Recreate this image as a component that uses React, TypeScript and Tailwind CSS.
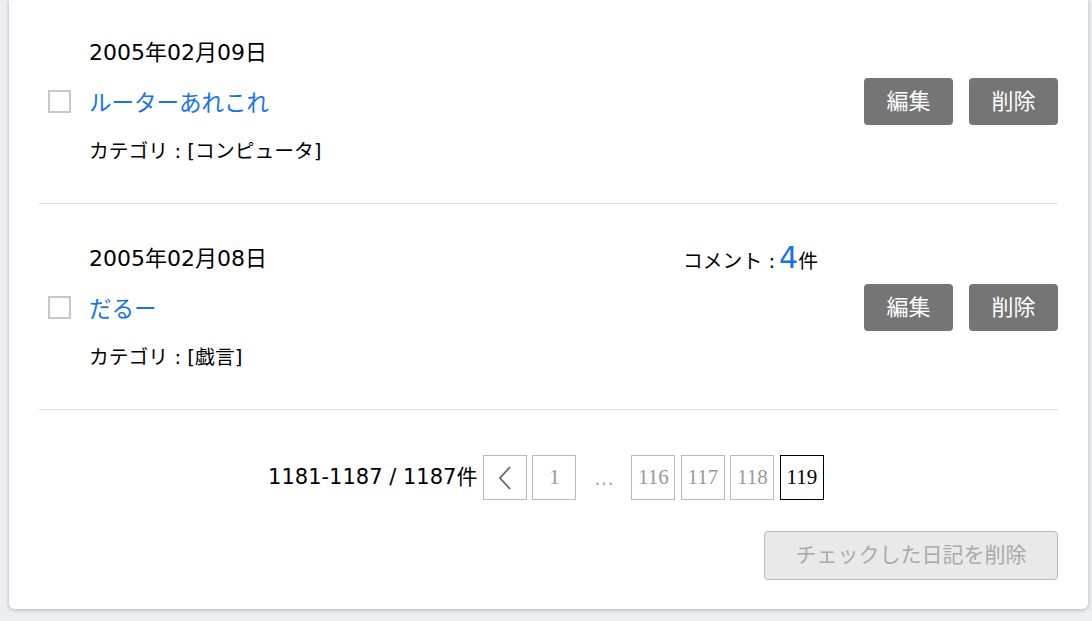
import React from "react";

type Entry = {
  date: string;
  title: string;
  category: string;
  comments?: number;
};

const entries: Entry[] = [
  { date: "2005年02月09日", title: "ルーターあれこれ", category: "コンピュータ" },
  { date: "2005年02月08日", title: "だるー", category: "戯言", comments: 4 },
];

const font = { fontFamily: '"DejaVu Sans", "Noto Sans CJK JP", sans-serif' };

function EntryRow({ entry, first }: { entry: Entry; first?: boolean }) {
  return (
    <div
      className={`flex items-center border-b border-[#dddddd] pb-[36px] ${first ? "pt-[35px]" : "pt-[37px]"}`}
    >
      <span className="ml-[9px] mr-[18px] h-[23px] w-[23px] shrink-0 border-2 border-[#c8c8c8] bg-white" />
      <div className="flex flex-1 flex-col">
        <div className="flex h-[34px] items-center text-[22px] text-black">{entry.date}</div>
        <a className="mt-[20px] flex h-[30px] items-center text-[22.5px] text-[#1672f3]">{entry.title}</a>
        <div className="mt-[18px] flex h-[30px] items-center text-[19.8px] text-black">
          カテゴリ : [{entry.category}]
        </div>
      </div>
      {entry.comments ? (
        <div className="mr-[46px] flex h-[36px] items-end self-start text-[19.8px] text-black">
          コメント :<span className="ml-[4px] text-[30px] leading-[38px] text-[#1672f3]">{entry.comments}</span>件
        </div>
      ) : null}
      <div className="flex gap-[16px]">
        <button className="h-[47px] w-[89px] rounded-[4px] bg-[#757575] text-[22px] text-white">編集</button>
        <button className="h-[47px] w-[89px] rounded-[4px] bg-[#757575] text-[22px] text-white">削除</button>
      </div>
    </div>
  );
}

function PageBox({ children, current }: { children: React.ReactNode; current?: boolean }) {
  return (
    <span
      className={`flex h-[45px] w-[44px] items-center justify-center border text-[21px] ${
        current ? "border-black text-black" : "border-[#bbbbbb] text-[#999999]"
      }`}
      style={{ fontFamily: '"Liberation Serif", serif' }}
    >
      {children}
    </span>
  );
}

export default function App() {
  return (
    <div className="min-h-[621px] bg-[#eceef1] pl-[9px] pr-[4px]" style={font}>
      <div className="rounded-b-[6px] bg-white px-[30px] pb-[29px] shadow-[0_1px_4px_rgba(0,0,0,0.25)]">
        {entries.map((entry, i) => (
          <EntryRow key={entry.date} entry={entry} first={i === 0} />
        ))}

        <div className="mt-[45px] flex items-center justify-center gap-[5.5px] pr-[5px]">
          <span className="text-[21px] text-black">1181-1187 / 1187件</span>
          <PageBox>
            <svg width="20" height="28" viewBox="0 0 20 28" fill="none">
              <path d="M15 3 L5 14 L15 25" stroke="#666666" strokeWidth="1.8" />
            </svg>
          </PageBox>
          <PageBox>1</PageBox>
          <span className="flex h-[45px] w-[44px] items-center justify-center text-[20px] text-[#aaaaaa]">…</span>
          <PageBox>116</PageBox>
          <PageBox>117</PageBox>
          <PageBox>118</PageBox>
          <PageBox current>119</PageBox>
        </div>

        <div className="mt-[31px] flex justify-end">
          <button
            disabled
            className="h-[49px] w-[294px] rounded-[4px] border border-[#bbbbbb] bg-[#e9e9e9] text-[21px] text-[#aaaaaa]"
          >
            チェックした日記を削除
          </button>
        </div>
      </div>
    </div>
  );
}
